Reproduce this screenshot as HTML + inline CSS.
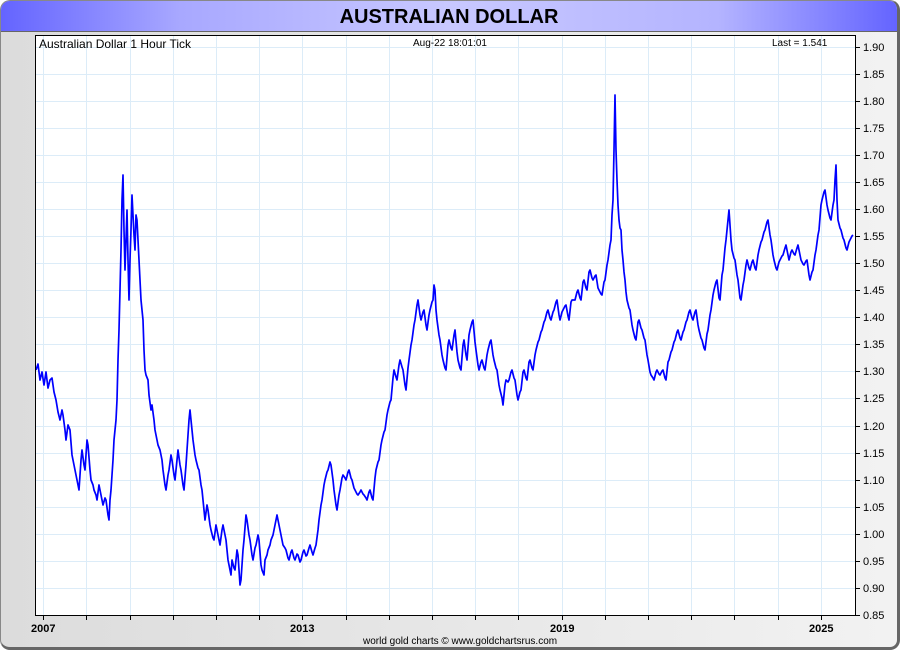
<!DOCTYPE html>
<html><head><meta charset="utf-8"><style>
body{margin:0;width:900px;height:650px;overflow:hidden;background:#fff;font-family:"Liberation Sans",Arial,sans-serif}
#frame{position:absolute;left:0;top:0;width:896px;height:646px;border:1px solid #888;border-right:3px solid #666;border-bottom:3px solid #666;border-radius:10px;background:linear-gradient(90deg,#dcdcdc,#f2f2f2);overflow:hidden}
#hdr{position:absolute;left:0;top:0;width:896px;height:30px;background:linear-gradient(90deg,#6464ff 0%,#a8a8ff 20%,#c8c8ff 50%,#b4b4ff 80%,#6464ff 100%);border-bottom:1px solid #666;text-align:center;font-weight:bold;font-size:20px;line-height:32px;color:#000}
svg{position:absolute;left:0;top:0}
</style></head><body>
<div id="frame"><div id="hdr">AUSTRALIAN DOLLAR</div></div>
<svg width="900" height="650" font-family="Liberation Sans, Arial, sans-serif">
<rect x="35.5" y="35.5" width="820" height="580" fill="#fff"/>
<g stroke="#dcecf8" stroke-width="1">
<path d="M43.5 36V615M86.5 36V615M130.5 36V615M173.5 36V615M216.5 36V615M259.5 36V615M302.5 36V615M346.5 36V615M389.5 36V615M432.5 36V615M475.5 36V615M518.5 36V615M562.5 36V615M605.5 36V615M648.5 36V615M691.5 36V615M734.5 36V615M778.5 36V615M821.5 36V615"/>
<path d="M36 47.5H855M36 74.5H855M36 101.5H855M36 128.5H855M36 155.5H855M36 182.5H855M36 209.5H855M36 236.5H855M36 263.5H855M36 290.5H855M36 317.5H855M36 344.5H855M36 371.5H855M36 398.5H855M36 426.5H855M36 453.5H855M36 480.5H855M36 507.5H855M36 534.5H855M36 561.5H855M36 588.5H855"/>
</g>
<polyline fill="none" stroke="#0000ff" stroke-width="1.7" stroke-linejoin="round" points="36,370 38,364 40,380 42,372 44,385 46,372 48,388 50,380 52,378 54,392 56,400 58,412 60,420 62,410 63,415 65,430 66,440 68,425 70,430 72,455 73,460 75,470 76,475 78,485 79,490 81,460 82,450 84,465 85,470 87,440 88,445 90,470 91,480 93,485 94,490 96,495 97,500 99,485 100,490 102,500 103,505 105,498 106,500 108,515 109,520 110,500 111,490 113,460 114,440 116,420 117,400 118,360 119,330 120,290 121,250 122,200 123,175 124,230 125,270 126,240 127,210 128,260 129,300 130,260 131,230 132,195 133,215 134,235 135,250 136,215 137,220 138,240 139,260 140,280 141,300 142,310 143,320 144,350 145,370 146,375 148,380 149,395 151,410 152,405 154,420 155,430 157,440 158,445 160,450 162,460 163,470 165,485 166,490 168,475 169,470 171,455 172,460 174,475 175,480 177,460 178,450 180,465 181,470 183,485 184,490 186,465 187,450 189,420 190,410 192,430 193,440 195,455 196,460 198,468 199,470 201,485 202,490 204,510 205,520 207,505 208,510 210,525 211,530 213,538 214,540 216,525 217,530 219,540 220,545 222,530 223,525 225,535 226,540 228,560 229,565 231,575 232,560 234,568 235,570 237,550 238,555 240,585 241,580 243,550 244,540 246,515 247,520 249,535 250,540 252,555 253,560 255,548 256,545 258,535 259,540 261,565 262,570 264,575 265,560 267,555 268,550 270,545 271,540 273,535 274,530 276,520 277,515 279,525 280,530 282,540 283,545 285,548 286,550 288,558 289,560 291,552 292,550 294,558 295,560 297,554 298,555 300,562 301,560 303,552 304,550 306,556 307,555 309,548 310,545 312,552 313,555 315,548 316,545 318,530 319,520 321,505 322,500 324,485 325,480 327,472 328,470 330,462 331,465 333,480 334,490 336,505 337,510 339,495 340,490 342,478 343,475 345,478 346,480 348,472 349,470 351,478 352,480 354,488 355,490 357,494 358,495 360,492 361,490 363,494 364,495 366,498 367,500 369,492 370,490 372,498 373,500 375,478 376,470 378,462 379,460 381,445 382,440 384,432 385,430 387,415 388,410 390,402 391,400 393,378 394,370 396,377 397,380 399,365 400,360 402,367 403,370 405,385 406,390 408,368 409,360 411,345 412,340 414,325 415,320 417,305 418,300 420,315 421,320 423,312 424,310 426,325 427,330 429,315 430,310 432,302 433,300 434,285 435,290 436,310 437,320 439,335 440,340 442,355 443,360 445,368 446,370 448,345 449,340 451,348 452,350 454,335 455,330 457,352 458,360 460,368 461,370 463,345 464,340 466,355 467,360 469,335 470,330 472,322 473,320 475,342 476,350 478,365 479,370 481,362 482,360 484,368 485,370 487,355 488,350 490,342 491,340 493,355 494,360 496,368 497,370 499,385 500,390 502,398 503,405 505,385 506,380 508,382 509,380 511,372 512,370 514,378 515,380 517,395 518,400 520,392 521,390 523,372 524,370 526,378 527,380 529,362 530,360 532,368 533,370 535,355 536,350 538,342 539,340 541,332 542,330 544,322 545,320 547,312 548,310 550,318 551,320 553,312 554,310 556,302 557,300 559,315 560,320 562,312 563,310 565,306 566,305 568,316 569,320 571,302 572,300 574,300 575,300 577,292 578,290 580,298 581,300 583,282 584,280 586,288 587,290 589,272 590,270 592,278 593,280 595,276 596,275 598,288 599,290 601,294 602,295 604,282 605,280 607,265 608,260 610,245 611,240 612,215 613,200 614,150 615,95 616,150 617,180 618,205 619,220 620,228 621,230 622,250 623,260 624,272 625,280 626,292 627,300 629,308 630,310 632,325 633,330 635,338 636,340 638,322 639,320 641,328 642,330 644,338 645,340 647,355 648,360 650,372 651,375 653,378 654,380 656,372 657,370 659,374 660,375 662,371 663,370 665,378 666,380 668,362 669,360 671,352 672,350 674,342 675,340 677,332 678,330 680,338 681,340 683,332 684,330 686,322 687,320 689,312 690,310 692,318 693,320 695,312 696,310 698,325 699,330 701,338 702,340 704,348 705,350 707,334 708,330 710,315 711,310 713,295 714,290 716,282 717,280 719,298 720,300 722,275 723,270 725,248 726,240 728,220 729,210 731,240 732,250 734,258 735,260 737,275 738,280 740,298 741,300 743,285 744,280 746,265 747,260 749,268 750,270 752,262 753,260 755,268 756,270 758,255 759,250 761,242 762,240 764,232 765,230 767,222 768,220 770,235 771,240 773,255 774,260 776,268 777,270 779,262 780,260 782,256 783,255 785,248 786,245 788,255 789,260 791,252 792,250 794,254 795,255 797,248 798,245 800,255 801,260 803,264 804,265 806,261 807,260 809,275 810,280 812,272 813,270 815,255 816,250 818,235 819,230 821,205 822,200 824,192 825,190 827,205 828,210 830,218 831,220 833,205 834,200 835,180 836,165 837,200 838,220 840,228 841,230 843,238 844,240 846,248 847,250 849,242 850,240 852,236 853,235"/>
<rect x="35.5" y="35.5" width="820" height="580" fill="none" stroke="#000" stroke-width="1"/>
<g stroke="#000"><path d="M855 47.5h5M855 74.5h5M855 101.5h5M855 128.5h5M855 155.5h5M855 182.5h5M855 209.5h5M855 236.5h5M855 263.5h5M855 290.5h5M855 317.5h5M855 344.5h5M855 371.5h5M855 398.5h5M855 426.5h5M855 453.5h5M855 480.5h5M855 507.5h5M855 534.5h5M855 561.5h5M855 588.5h5M855 615.5h5"/>
<path d="M43.5 615v5M86.5 615v5M130.5 615v5M173.5 615v5M216.5 615v5M259.5 615v5M302.5 615v5M346.5 615v5M389.5 615v5M432.5 615v5M475.5 615v5M518.5 615v5M562.5 615v5M605.5 615v5M648.5 615v5M691.5 615v5M734.5 615v5M778.5 615v5M821.5 615v5"/></g>
<g font-size="11" fill="#000">
<text x="863" y="51">1.90</text><text x="863" y="78">1.85</text><text x="863" y="105">1.80</text><text x="863" y="132">1.75</text><text x="863" y="159">1.70</text><text x="863" y="186">1.65</text><text x="863" y="213">1.60</text><text x="863" y="240">1.55</text><text x="863" y="267">1.50</text><text x="863" y="294">1.45</text><text x="863" y="321">1.40</text><text x="863" y="348">1.35</text><text x="863" y="375">1.30</text><text x="863" y="402">1.25</text><text x="863" y="430">1.20</text><text x="863" y="457">1.15</text><text x="863" y="484">1.10</text><text x="863" y="511">1.05</text><text x="863" y="538">1.00</text><text x="863" y="565">0.95</text><text x="863" y="592">0.90</text><text x="863" y="619">0.85</text>
</g>
<g font-size="11" font-weight="bold" fill="#000"><text x="31" y="632">2007</text><text x="290" y="632">2013</text><text x="550" y="632">2019</text><text x="809" y="632">2025</text></g>
<text x="39" y="48" font-size="12">Australian Dollar 1 Hour Tick</text>
<text x="413" y="46" font-size="10">Aug-22  18:01:01</text>
<text x="772" y="46" font-size="10">Last = 1.541</text>
<text x="363" y="644" font-size="10">world gold charts © www.goldchartsrus.com</text>
</svg>
</body></html>
